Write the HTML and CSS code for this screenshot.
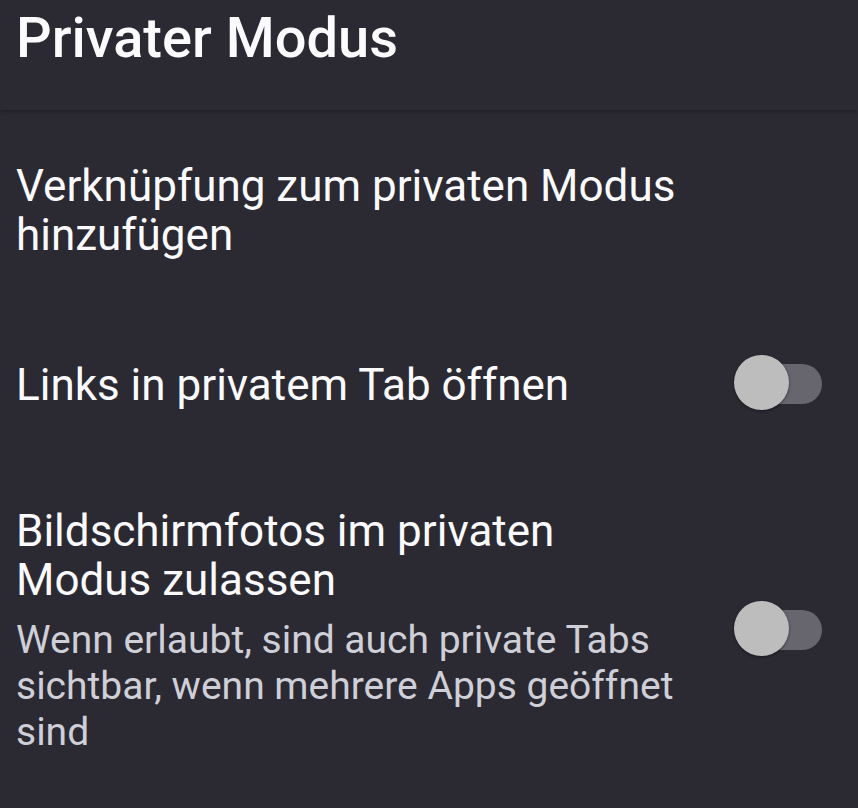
FILE: index.html
```html
<!DOCTYPE html>
<html lang="de">
<head>
<meta charset="utf-8">
<link rel="stylesheet" href="styles.css">
</head>
<body>
<header class="appbar">
  <h1 class="appbar-title">Privater Modus</h1>
</header>
<main class="prefs">
  <div class="pref pref-first">
    <div class="pref-text">
      <div class="pref-title">Verknüpfung zum privaten Modus hinzufügen</div>
    </div>
  </div>
  <div class="pref">
    <div class="pref-text">
      <div class="pref-title">Links in privatem Tab öffnen</div>
    </div>
    <div class="switch"><span class="switch-track"></span><span class="switch-thumb"></span></div>
  </div>
  <div class="pref">
    <div class="pref-text">
      <div class="pref-title">Bildschirmfotos im privaten Modus zulassen</div>
      <div class="pref-summary">Wenn erlaubt, sind auch private Tabs sichtbar, wenn mehrere Apps geöffnet sind</div>
    </div>
    <div class="switch"><span class="switch-track"></span><span class="switch-thumb"></span></div>
  </div>
</main>
</body>
</html>
```
FILE: styles.css
```css
html, body {
  margin: 0;
  padding: 0;
  background: #2b2a33;
  font-family: Roboto, "Noto Sans", sans-serif;
  color: #fbfbfe;
  height: 808px;
  overflow: hidden;
}
.appbar {
  height: 110px;
  background: #2b2a33;
  box-shadow: 0 2px 5px rgba(0,0,0,0.28);
  position: relative;
  z-index: 1;
  padding: 0 16px;
}
.appbar-title {
  margin: 0;
  font-size: 56px;
  font-weight: 500;
  line-height: 76px;
  letter-spacing: 0;
}
.prefs {
  display: flex;
  flex-direction: column;
}
.pref {
  display: flex;
  align-items: center;
  padding: 47px 36px 47px 16px;
  gap: 38px;
}
.pref-first {
  padding-top: 52px;
  padding-bottom: 50px;
}
.pref-text {
  flex: 1;
  min-width: 0;
}
.pref-title {
  font-size: 44px;
  line-height: 49px;
  color: #fbfbfe;
}
.pref-summary {
  font-size: 39px;
  line-height: 46px;
  color: #cfcfd8;
  margin-top: 12px;
}
.switch {
  position: relative;
  width: 88px;
  height: 56px;
  flex: none;
}
.switch-track {
  position: absolute;
  left: 4px;
  right: 0;
  top: 7px;
  height: 40px;
  border-radius: 20px;
  background: #67666f;
}
.switch-thumb {
  position: absolute;
  left: 0;
  top: -2px;
  width: 55px;
  height: 55px;
  border-radius: 50%;
  background: #bdbdbd;
  box-shadow: 0 1px 3px rgba(0,0,0,0.45);
}
```
